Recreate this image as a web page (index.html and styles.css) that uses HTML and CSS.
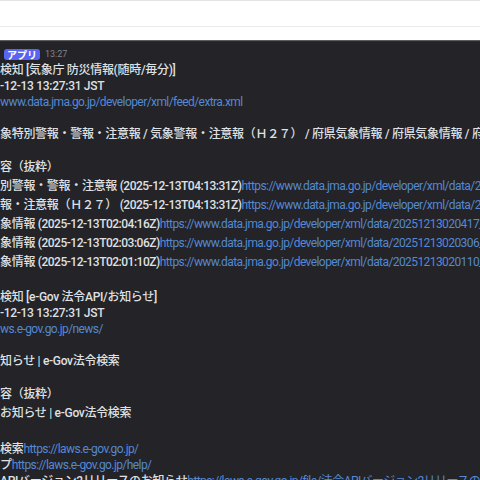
FILE: index.html
```html
<!DOCTYPE html>
<html lang="ja">
<head>
<meta charset="utf-8">
<link rel="stylesheet" href="styles.css">
</head>
<body>
<div class="top">
  <div class="top-a"></div>
  <div class="top-b"></div>
</div>
<div class="chat">
  <div class="head">
    <span class="badge">アプリ</span>
    <span class="time">13:27</span>
  </div>
  <div class="msg">
    <div class="ln">検知 [気象庁 防災情報(随時/毎分)]</div>
    <div class="ln">-12-13 13:27:31 JST</div>
    <div class="ln"><a class="lk">www.data.jma.go.jp/developer/xml/feed/extra.xml</a></div>
    <div class="ln"></div>
    <div class="ln">象特別警報・警報・注意報 / 気象警報・注意報（Ｈ２７） / 府県気象情報 / 府県気象情報 / 府県気象情報</div>
    <div class="ln"></div>
    <div class="ln tall">容（抜粋）</div>
    <div class="ln tall">別警報・警報・注意報 <span class="dt">(2025-12-13T04:13:31Z)</span><a class="lk">https://www.data.jma.go.jp/developer/xml/data/20251213041331_0_VPWW54_010000.xml</a></div>
    <div class="ln tall">報・注意報（Ｈ２７） <span class="dt">(2025-12-13T04:13:31Z)</span><a class="lk">https://www.data.jma.go.jp/developer/xml/data/20251213041331_0_VPWW55_010000.xml</a></div>
    <div class="ln tall">象情報 <span class="dt">(2025-12-13T02:04:16Z)</span><a class="lk">https://www.data.jma.go.jp/developer/xml/data/20251213020417_0_VPFJ50_010000.xml</a></div>
    <div class="ln tall">象情報 <span class="dt">(2025-12-13T02:03:06Z)</span><a class="lk">https://www.data.jma.go.jp/developer/xml/data/20251213020306_0_VPFJ50_010000.xml</a></div>
    <div class="ln tall">象情報 <span class="dt">(2025-12-13T02:01:10Z)</span><a class="lk">https://www.data.jma.go.jp/developer/xml/data/20251213020110_0_VPFJ50_010000.xml</a></div>
    <div class="ln gap"></div>
    <div class="ln">検知 [e-Gov 法令API/お知らせ]</div>
    <div class="ln">-12-13 13:27:31 JST</div>
    <div class="ln"><a class="lk">ws.e-gov.go.jp/news/</a></div>
    <div class="ln"></div>
    <div class="ln">知らせ | e-Gov法令検索</div>
    <div class="ln"></div>
    <div class="ln tall">容（抜粋）</div>
    <div class="ln tall">お知らせ | e-Gov法令検索</div>
    <div class="ln gap2"></div>
    <div class="ln">検索<a class="lk">https://laws.e-gov.go.jp/</a></div>
    <div class="ln">プ<a class="lk">https://laws.e-gov.go.jp/help/</a></div>
    <div class="ln">APIバージョン2リリースのお知らせ<a class="lk">https://laws.e-gov.go.jp/file/法令APIバージョン2リリースのお知らせ.pdf</a></div>
  </div>
</div>
</body>
</html>
```
FILE: styles.css
```css
html, body {
  margin: 0;
  padding: 0;
  width: 480px;
  height: 480px;
  overflow: hidden;
  background: #232328;
}
.top {
  height: 40px;
  background: #ffffff;
  border-top: 1px solid #e4e4e4;
  box-sizing: border-box;
  display: flex;
  flex-direction: column;
}
.top-a {
  height: 25px;
  border-bottom: 1px solid #ececec;
}
.top-b {
  flex: 1;
}
.chat {
  border-top: 1px solid #5c5c60;
  box-shadow: inset 0 1px 0 #2b2b30;
  background: #232328;
  height: 439px;
  overflow: hidden;
  font-family: Roboto, "Noto Sans CJK JP", sans-serif;
  color: #dfe0e3;
}
.head {
  height: 21px;
  display: flex;
  align-items: center;
  gap: 5px;
  padding-left: 4px;
  padding-top: 5px;
  box-sizing: border-box;
}
.badge {
  background: #5865f2;
  color: #ffffff;
  font-family: "Noto Sans CJK JP", sans-serif;
  font-weight: 700;
  font-size: 10px;
  line-height: 11px;
  height: 11px;
  padding: 0 3px;
  border-radius: 3px;
}
.time {
  color: #80848e;
  font-size: 9px;
  line-height: 11px;
}
.msg {
  font-size: 12px;
  font-weight: 500;
  letter-spacing: -0.3px;
}
.ln {
  height: 16px;
  line-height: 16px;
  white-space: nowrap;
}
.ln.tall {
  height: 19px;
  line-height: 19px;
}
.ln.gap {
  height: 17px;
}
.ln.gap2 {
  height: 18px;
}
.dt {
  letter-spacing: -0.5px;
}
.lk {
  color: #5589d2;
  font-weight: 400;
  letter-spacing: -0.58px;
}
```
